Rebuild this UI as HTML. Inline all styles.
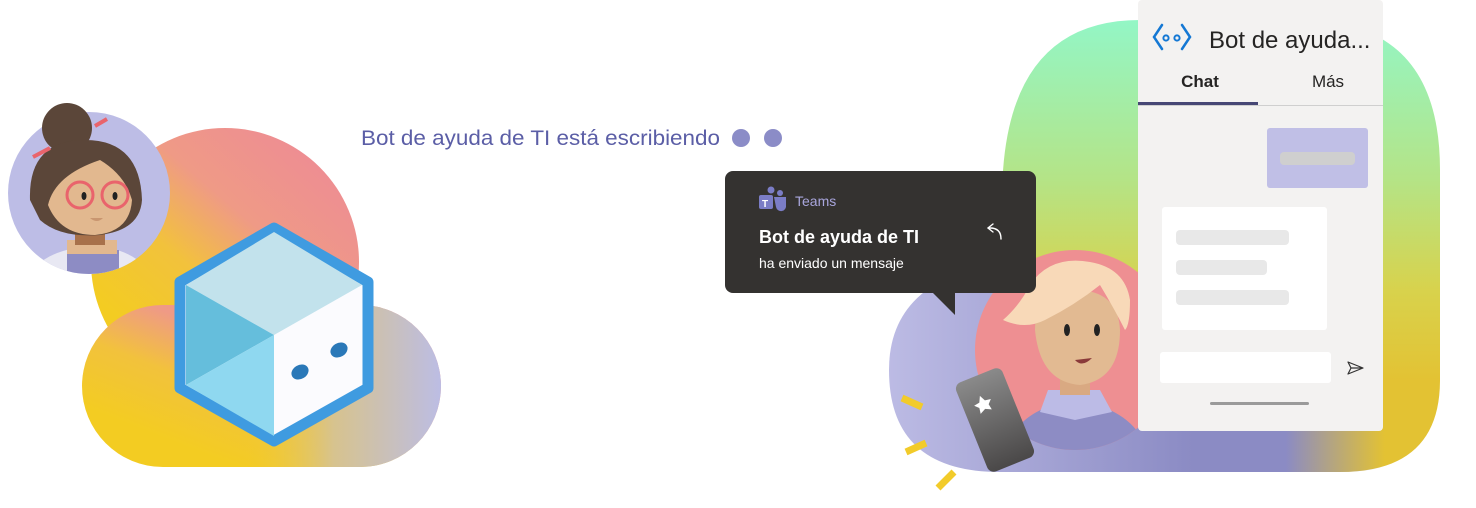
<!DOCTYPE html>
<html><head><meta charset="utf-8"><style>
html,body{margin:0;padding:0;background:#fff;width:1476px;height:508px;overflow:hidden;font-family:"Liberation Sans",sans-serif}
svg{position:absolute;left:0;top:0}
</style></head><body>
<svg width="1476" height="508" viewBox="0 0 1476 508">
<defs>
<linearGradient id="lg" x1="0.8" y1="0.1" x2="0.2" y2="0.8">
<stop offset="0" stop-color="#ee8e92"/><stop offset="0.35" stop-color="#ef9a86"/><stop offset="0.65" stop-color="#f2c23c"/><stop offset="1" stop-color="#f3cc22"/></linearGradient>
<linearGradient id="lg2" x1="0" y1="0" x2="1" y2="0">
<stop offset="0.45" stop-color="#f3cc2a" stop-opacity="0"/><stop offset="0.7" stop-color="#d7c38e"/><stop offset="1" stop-color="#bcbde4"/></linearGradient>
<linearGradient id="rg" x1="0" y1="0" x2="0" y2="1">
<stop offset="0" stop-color="#93f6c6"/><stop offset="0.35" stop-color="#b4e487"/><stop offset="0.6" stop-color="#d8d24c"/><stop offset="0.8" stop-color="#e3c233"/></linearGradient>
<linearGradient id="rg2" x1="889" y1="0" x2="1440" y2="0" gradientUnits="userSpaceOnUse">
<stop offset="0" stop-color="#bcbbe4"/><stop offset="0.55" stop-color="#8b8bc4"/><stop offset="0.72" stop-color="#8b8bc4"/><stop offset="0.9" stop-color="#8b8bc4" stop-opacity="0"/></linearGradient>
<linearGradient id="ph" x1="0" y1="0" x2="0" y2="1"><stop offset="0" stop-color="#8a8a8a"/><stop offset="1" stop-color="#4a4848"/></linearGradient>
<clipPath id="wc"><circle cx="89" cy="193" r="81"/></clipPath>
<clipPath id="mc"><circle cx="1075" cy="350" r="100"/></clipPath>
</defs>
<g>
<circle cx="225" cy="262" r="134" fill="url(#lg)"/>
<path d="M163 305 H360 A81 81 0 0 1 360 467 H163 A81 81 0 0 1 163 305Z" fill="url(#lg)"/>
<path d="M163 305 H360 A81 81 0 0 1 360 467 H163 A81 81 0 0 1 163 305Z" fill="url(#lg2)"/>
</g>
<circle cx="89" cy="193" r="81" fill="#bdbde6"/>
<g clip-path="url(#wc)">
<path d="M30 275 Q40 255 75 248 H110 Q140 255 150 275Z" fill="#e8e8f3"/>
<rect x="67" y="250" width="52" height="30" fill="#8d8cc4"/>
<rect x="67" y="240" width="50" height="14" fill="#e2b88f"/>
<rect x="75" y="225" width="30" height="20" fill="#a8714a"/>
</g>
<circle cx="67" cy="128" r="25" fill="#5b4639"/>
<path d="M30 200 Q28 140 85 140 Q140 140 142 200 Q140 230 100 235 Q60 238 40 220Z" fill="#5b4639"/>
<path d="M48 205 Q55 175 100 160 Q125 175 132 200 Q130 232 95 235 Q60 235 48 205Z" fill="#e2b88f"/>
<circle cx="80" cy="195" r="13" fill="none" stroke="#e9646c" stroke-width="3"/>
<circle cx="115" cy="195" r="13" fill="none" stroke="#e9646c" stroke-width="3"/>
<ellipse cx="84" cy="196" rx="2.5" ry="4" fill="#222"/><ellipse cx="115" cy="196" rx="2.5" ry="4" fill="#222"/>
<path d="M90 218 Q97 224 103 218" fill="#c99670"/>
<path d="M33 157 L50 148" stroke="#e9646c" stroke-width="4"/><path d="M95 126 L107 119" stroke="#e9646c" stroke-width="4"/>
<path d="M274 228 L368 282 L368 388 L274 441 L180 388 L180 282Z" fill="#fbfbfe" stroke="#3f9be0" stroke-width="11" stroke-linejoin="round"/>
<path d="M274 232 L362 285 L274 335 L186 285Z" fill="#c2e2ec"/>
<path d="M186 285 L274 335 L186 385Z" fill="#65bedc"/>
<path d="M186 385 L274 335 L274 436 L186 385Z" fill="#8fd8f0"/>
<ellipse cx="300" cy="372" rx="9" ry="7" transform="rotate(-30 300 372)" fill="#2a78b8"/>
<ellipse cx="339" cy="350" rx="9" ry="7" transform="rotate(-30 339 350)" fill="#2a78b8"/>
<text x="361" y="145" font-size="21" fill="#5b5ea6" textLength="359" lengthAdjust="spacingAndGlyphs">Bot de ayuda de TI está escribiendo</text>
<circle cx="741" cy="138" r="9" fill="#8b8cc7"/><circle cx="773" cy="138" r="9" fill="#8b8cc7"/>
<path d="M1140 20 H1300 Q1440 20 1440 170 V380 Q1440 472 1340 472 H1000 Q1002 300 1002 200 Q1002 20 1140 20Z" fill="url(#rg)"/>
<path d="M1002 262 Q889 280 889 370 Q889 472 1000 472 H1340 Q1420 472 1435 420 H1140 V300 H1002Z" fill="url(#rg2)"/>
<circle cx="1075" cy="350" r="100" fill="#ee8f92"/>
<g clip-path="url(#mc)">
<path d="M1005 460 Q1010 410 1075 400 Q1140 410 1150 460Z" fill="#8d8cc4"/>
<path d="M1048 390 L1100 390 L1112 412 L1075 420 L1040 412Z" fill="#bcbbe6"/>
<rect x="1060" y="370" width="30" height="25" fill="#d9a982"/>
<path d="M1035 330 Q1035 290 1075 290 Q1118 290 1120 330 Q1120 380 1080 385 Q1040 382 1035 330Z" fill="#e2ba92"/>
<path d="M1003 320 Q1020 305 1030 285 Q1050 255 1090 262 Q1125 268 1130 300 Q1130 325 1125 330 Q1115 310 1100 285 Q1075 305 1045 320 Q1025 330 1003 320Z" fill="#f8d9b8"/>
<ellipse cx="1067" cy="330" rx="3" ry="6" fill="#222"/><ellipse cx="1097" cy="330" rx="3" ry="6" fill="#222"/>
<path d="M1075 360 Q1082 368 1092 358Z" fill="#8a3a3a"/>
</g>
<g transform="rotate(-22 995 420)"><rect x="970" y="372" width="50" height="96" rx="7" fill="url(#ph)"/><path d="M990 392 l3 6 6 1 -4 4 1 6 -6 -3 -6 3 1 -6 -4 -4 6 -1z" fill="#fff"/></g>
<g stroke="#f2cb2a" stroke-width="7"><path d="M902 398 L922 407"/><path d="M906 452 L926 443"/><path d="M938 488 L954 472"/></g>
<path d="M930 290 L955 315 L955 290Z" fill="#343230"/>
<rect x="725" y="171" width="311" height="122" rx="8" fill="#343230"/>
<g fill="#7b7dc6"><rect x="759" y="195" width="14" height="14" rx="2"/><circle cx="771" cy="190" r="3.5"/><circle cx="780" cy="193" r="3"/><path d="M774 197 h12 v8 a5 5 0 0 1 -10 2z"/></g>
<text x="762" y="207" font-size="10" font-weight="bold" fill="#fff">T</text>
<text x="795" y="206" font-size="14" fill="#a9a6dd">Teams</text>
<text x="759" y="243" font-size="18" font-weight="bold" fill="#fff">Bot de ayuda de TI</text>
<text x="759" y="268" font-size="14" fill="#fff">ha enviado un mensaje</text>
<path d="M1001 239 Q1001 228 990 228 M993 224 L988 228 L993 232" fill="none" stroke="#fff" stroke-width="1.4" stroke-linecap="round"/>
<rect x="1138" y="0" width="245" height="431" rx="4" fill="#f3f2f1"/>
<g fill="none" stroke="#1478d4" stroke-width="2.5" stroke-linecap="round"><path d="M1162 25 L1154 37 L1162 49"/><path d="M1182 25 L1190 37 L1182 49"/></g>
<circle cx="1166" cy="38" r="2.6" fill="none" stroke="#1478d4" stroke-width="2"/><circle cx="1177" cy="38" r="2.6" fill="none" stroke="#1478d4" stroke-width="2"/>
<text x="1209" y="48" font-size="24" fill="#252423">Bot de ayuda...</text>
<text x="1200" y="87" font-size="17" font-weight="bold" fill="#252423" text-anchor="middle">Chat</text>
<text x="1328" y="87" font-size="17" fill="#252423" text-anchor="middle">Más</text>
<rect x="1138" y="105" width="245" height="1" fill="#cfcfcf"/>
<rect x="1138" y="102" width="120" height="3" fill="#464775"/>
<rect x="1267" y="128" width="101" height="60" rx="3" fill="#c0bfe6"/>
<rect x="1280" y="152" width="75" height="13" rx="4" fill="#cfcfcf"/>
<rect x="1162" y="207" width="165" height="123" rx="3" fill="#fff"/>
<rect x="1176" y="230" width="113" height="15" rx="4" fill="#e8e8e8"/>
<rect x="1176" y="260" width="91" height="15" rx="4" fill="#e8e8e8"/>
<rect x="1176" y="290" width="113" height="15" rx="4" fill="#e8e8e8"/>
<rect x="1160" y="352" width="171" height="31" rx="3" fill="#fff"/>
<path d="M1348 362 L1363 368 L1348 374 L1351 368Z M1351 368 H1363" fill="none" stroke="#333" stroke-width="1.2" stroke-linejoin="round"/>
<rect x="1210" y="402" width="99" height="3" rx="1.5" fill="#9a9a9a"/>
</svg>
</body></html>
